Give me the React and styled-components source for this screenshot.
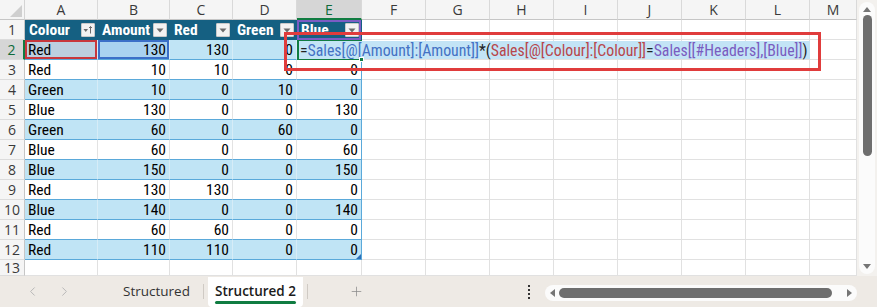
import React from "react";
import styled, { createGlobalStyle } from "styled-components";
import { ChevronLeft, ChevronRight, Plus } from "lucide-react";

const GlobalStyle = createGlobalStyle`
  html, body {
    margin: 0;
    padding: 0;
    background: #ffffff;
  }
  * {
    box-sizing: border-box;
  }
`;

const CELL_FONT = `"Roboto Condensed", "Liberation Sans Narrow", "DejaVu Sans Condensed", Roboto, sans-serif`;
const UI_FONT = `"Open Sans", "Noto Sans", Roboto, sans-serif`;

const widths = [73, 72, 63, 64, 65, 64, 64, 64, 64, 64, 64, 64, 47];
const letters = ["A", "B", "C", "D", "E", "F", "G", "H", "I", "J", "K", "L", "M"];

const headers = ["Colour", "Amount", "Red", "Green", "Blue"];
const rows = [
  ["Red", 130, 130, 0, null],
  ["Red", 10, 10, 0, 0],
  ["Green", 10, 0, 10, 0],
  ["Blue", 130, 0, 0, 130],
  ["Green", 60, 0, 60, 0],
  ["Blue", 60, 0, 0, 60],
  ["Blue", 150, 0, 0, 150],
  ["Red", 130, 130, 0, 0],
  ["Blue", 140, 0, 0, 140],
  ["Red", 60, 60, 0, 0],
  ["Red", 110, 110, 0, 0],
];

const Window = styled.div`
  width: 877px;
  height: 307px;
  display: flex;
  flex-direction: column;
  overflow: hidden;
  background: #eeeae5;
`;

const Main = styled.div`
  display: flex;
  height: 276px;
`;

const Sheet = styled.div`
  position: relative;
  width: 857px;
  height: 276px;
  overflow: hidden;
  background: #ffffff;
  display: grid;
  grid-template-columns: 25px ${widths.map((w) => `${w}px`).join(" ")};
  grid-template-rows: repeat(13, 20px) 16px;
  font-family: ${CELL_FONT};
  font-size: 15.5px;
  color: #000;
`;

const Corner = styled.div`
  position: relative;
  background: #f5f5f5;
  border-right: 1px solid #d4d4d4;
  border-bottom: 1px solid #c6c6c6;
  &::after {
    content: "";
    position: absolute;
    right: 2px;
    bottom: 2px;
    border-left: 12px solid transparent;
    border-bottom: 12px solid #cfcfcf;
  }
`;

const ColHead = styled.div`
  display: flex;
  align-items: center;
  justify-content: center;
  font-family: ${UI_FONT};
  font-size: 14px;
  color: ${({ $active }) => ($active ? "#0f6b3a" : "#3a3a3a")};
  background: ${({ $active }) => ($active ? "#d6d6d6" : "#f5f5f5")};
  border-right: 1px solid #d9d9d9;
  border-bottom: ${({ $active }) => ($active ? "2px solid #107c41" : "1px solid #c6c6c6")};
`;

const RowHead = styled.div`
  display: flex;
  align-items: center;
  justify-content: center;
  font-family: ${UI_FONT};
  font-size: 14px;
  color: ${({ $active }) => ($active ? "#0f6b3a" : "#3a3a3a")};
  background: ${({ $active }) => ($active ? "#d6d6d6" : "#f5f5f5")};
  border-bottom: 1px solid #dcdcdc;
  border-right: ${({ $active }) => ($active ? "2px solid #107c41" : "1px solid #c6c6c6")};
`;

const HeaderCell = styled.div`
  display: flex;
  align-items: center;
  justify-content: space-between;
  padding: 0 2px 0 4px;
  background: #156082;
  color: #ffffff;
  font-weight: 700;
  border-right: 1px solid #156082;
  box-shadow: ${({ $outline }) => ($outline ? `inset 0 0 0 2px ${$outline}` : "none")};
  overflow: hidden;
  white-space: nowrap;
`;

const FilterButton = styled.span`
  width: 14px;
  height: 14px;
  flex: none;
  display: flex;
  align-items: center;
  justify-content: center;
  background: #f2f2f2;
  border: 1px solid #c9c9c9;
  border-radius: 1px;
`;

const DataCell = styled.div`
  position: relative;
  display: flex;
  align-items: center;
  justify-content: ${({ $num }) => ($num ? "flex-end" : "flex-start")};
  padding: ${({ $num }) => ($num ? "0 3px 0 0" : "0 0 0 3px")};
  background: ${({ $fill, $band }) => $fill || ($band ? "#c0e4f5" : "#ffffff")};
  border-bottom: 1px solid #5aa9da;
  border-right: 1px solid ${({ $last, $band }) => ($last ? "#5aa9da" : $band ? "#d6ecf7" : "#e3e3e3")};
  box-shadow: ${({ $outline }) => ($outline ? `inset 0 0 0 2px ${$outline}` : "none")};
  white-space: nowrap;
`;

const EmptyCell = styled.div`
  border-right: 1px solid #e1e1e1;
  border-bottom: 1px solid #e1e1e1;
`;

const EditCell = styled.div`
  position: relative;
  z-index: 2;
  border: 2px solid #107c41;
  background: #c3e4f6;
`;

const FormulaText = styled.span`
  position: absolute;
  left: 0;
  top: -1px;
  width: 511px;
  height: 18px;
  display: flex;
  align-items: center;
  padding-left: 1px;
  background: #c3e4f6;
  white-space: nowrap;
  font-size: 15.8px;
  color: #222;
`;

const Ref = styled.span`
  color: ${({ $c }) => $c};
`;

const FillHandle = styled.span`
  position: absolute;
  right: -4px;
  bottom: -4px;
  width: 5px;
  height: 5px;
  background: #107c41;
  border: 1px solid #ffffff;
  z-index: 3;
`;

const ResizeHandle = styled.span`
  position: absolute;
  right: 0;
  bottom: 0;
  border-left: 5px solid transparent;
  border-bottom: 5px solid #2f6fb7;
`;

const Annotation = styled.div`
  position: absolute;
  left: 284px;
  top: 32px;
  width: 537px;
  height: 39px;
  border: 3px solid #e03c3c;
  z-index: 5;
  pointer-events: none;
`;

const VScroll = styled.div`
  width: 20px;
  height: 276px;
  background: #f3f1ee;
  padding: 2px 2px 2px 2px;
`;

const VTrack = styled.div`
  height: 100%;
  border-radius: 8px;
  background: #fbfbfb;
  display: flex;
  flex-direction: column;
  align-items: center;
  padding-top: 5px;
`;

const VThumb = styled.div`
  width: 9px;
  height: 141px;
  margin-top: 3px;
  border-radius: 5px;
  background: #6e6e6e;
`;

const Arrow = styled.span`
  width: 0;
  height: 0;
  border-style: solid;
  border-color: transparent;
  ${({ $dir }) =>
    $dir === "up"
      ? "border-width: 0 4px 5px 4px; border-bottom-color: #757575;"
      : $dir === "down"
      ? "border-width: 5px 4px 0 4px; border-top-color: #757575;"
      : $dir === "left"
      ? "border-width: 4px 5px 4px 0; border-right-color: #757575;"
      : "border-width: 4px 0 4px 5px; border-left-color: #757575;"}
`;

const Spacer = styled.div`
  flex: 1;
`;

const BottomGap = styled.div`
  height: 5px;
`;

const TabBar = styled.div`
  height: 31px;
  display: flex;
  align-items: stretch;
  font-family: ${UI_FONT};
  font-size: 13.5px;
  color: #333;
`;

const NavArea = styled.div`
  width: 110px;
  display: flex;
  align-items: center;
  gap: 17px;
  padding-left: 25px;
  color: #b3b3b3;
`;

const Tab = styled.div`
  width: ${({ $w }) => $w}px;
  display: flex;
  align-items: center;
  justify-content: center;
  position: relative;
  background: ${({ $active }) => ($active ? "#ffffff" : "transparent")};
  font-weight: ${({ $active }) => ($active ? 600 : 400)};
  color: ${({ $active }) => ($active ? "#1b1b1b" : "#333")};
  border-radius: 0 0 4px 4px;
  padding-bottom: 2px;
  margin: ${({ $active }) => ($active ? "1px 4px 0" : "0")};
`;

const TabLabel = styled.span`
  position: relative;
  &::after {
    content: "";
    display: ${({ $active }) => ($active ? "block" : "none")};
    position: absolute;
    left: 0;
    right: 0;
    bottom: -4px;
    height: 3px;
    border-radius: 2px;
    background: #107c41;
  }
`;

const TabDivider = styled.div`
  width: 1px;
  margin: 8px 0;
  background: #cfcac4;
`;

const AddArea = styled.div`
  width: 96px;
  display: flex;
  align-items: center;
  justify-content: center;
  color: #8a8a8a;
`;

const Dots = styled.div`
  width: 8px;
  display: flex;
  flex-direction: column;
  align-items: center;
  justify-content: center;
  gap: 2px;
  margin-right: 12px;
  span {
    width: 2px;
    height: 2px;
    background: #333;
  }
`;

const HScroll = styled.div`
  width: 312px;
  height: 16px;
  margin-top: 9px;
  border-radius: 8px;
  background: #fbfbfb;
  display: flex;
  align-items: center;
  padding: 0 5px;
  gap: 4px;
`;

const HThumb = styled.div`
  width: 273px;
  height: 10px;
  border-radius: 5px;
  background: #6e6e6e;
`;

const RightPad = styled.div`
  width: 20px;
`;

function DropIcon({ sort }) {
  return (
    <FilterButton>
      <svg width="10" height="10" viewBox="0 0 10 10">
        {sort ? (
          <>
            <path d="M0.5 4 L5 4 L2.75 7 Z" fill="#6b6b6b" />
            <path d="M7.5 1.5 L7.5 8.5 M6 3 L7.5 1.5 L9 3" stroke="#6b6b6b" strokeWidth="1" fill="none" />
          </>
        ) : (
          <path d="M1.5 3.5 L8.5 3.5 L5 7.5 Z" fill="#6b6b6b" />
        )}
      </svg>
    </FilterButton>
  );
}

function Formula() {
  return (
    <FormulaText>
      =<Ref $c="#4472c4">Sales[@[Amount]:[Amount]]</Ref>*(
      <Ref $c="#b8464b">Sales[@[Colour]:[Colour]]</Ref>=
      <Ref $c="#7a5cc0">Sales[[#Headers],[Blue]]</Ref>)
    </FormulaText>
  );
}

export default function App() {
  const cells = [];
  cells.push(<Corner key="corner" />);
  letters.forEach((l) =>
    cells.push(
      <ColHead key={`h-${l}`} $active={l === "E"}>
        {l}
      </ColHead>
    )
  );

  // row 1: table headers
  cells.push(<RowHead key="r1">1</RowHead>);
  headers.forEach((h, i) =>
    cells.push(
      <HeaderCell key={`th-${h}`} $outline={h === "Blue" ? "#7b5cc4" : null}>
        {h}
        <DropIcon sort={i === 0} />
      </HeaderCell>
    )
  );
  for (let c = 5; c < letters.length; c++) cells.push(<EmptyCell key={`e1-${c}`} />);

  rows.forEach((r, ri) => {
    const rowNum = ri + 2;
    const band = rowNum % 2 === 0;
    cells.push(
      <RowHead key={`r${rowNum}`} $active={rowNum === 2}>
        {rowNum}
      </RowHead>
    );
    r.forEach((v, ci) => {
      if (rowNum === 2 && ci === 4) {
        cells.push(
          <EditCell key="edit">
            <Formula />
            <FillHandle />
          </EditCell>
        );
        return;
      }
      let fill = null;
      let outline = null;
      if (rowNum === 2 && ci === 0) {
        fill = "#bccfe0";
        outline = "#c8373d";
      }
      if (rowNum === 2 && ci === 1) {
        fill = "#a9d2f0";
        outline = "#3b6fc8";
      }
      cells.push(
        <DataCell
          key={`d-${rowNum}-${ci}`}
          $num={ci > 0}
          $band={band}
          $last={ci === 4}
          $fill={fill}
          $outline={outline}
        >
          {v}
          {rowNum === 12 && ci === 4 && <ResizeHandle />}
        </DataCell>
      );
    });
    for (let c = 5; c < letters.length; c++) cells.push(<EmptyCell key={`e${rowNum}-${c}`} />);
  });

  cells.push(<RowHead key="r13">13</RowHead>);
  for (let c = 0; c < letters.length; c++) cells.push(<EmptyCell key={`e13-${c}`} />);

  return (
    <>
      <GlobalStyle />
      <Window>
        <Main>
          <Sheet>
            {cells}
            <Annotation />
          </Sheet>
          <VScroll>
            <VTrack>
              <Arrow $dir="up" />
              <VThumb />
              <Spacer />
              <Arrow $dir="down" />
              <BottomGap />
            </VTrack>
          </VScroll>
        </Main>
        <TabBar>
          <NavArea>
            <ChevronLeft size={15} strokeWidth={1.5} />
            <ChevronRight size={15} strokeWidth={1.5} />
          </NavArea>
          <Tab $w={93}>
            <TabLabel>Structured</TabLabel>
          </Tab>
          <TabDivider />
          <Tab $w={95} $active>
            <TabLabel $active>Structured 2</TabLabel>
          </Tab>
          <TabDivider />
          <AddArea>
            <Plus size={15} strokeWidth={1.2} />
          </AddArea>
          <Spacer />
          <Dots>
            <span />
            <span />
            <span />
            <span />
          </Dots>
          <HScroll>
            <Arrow $dir="left" />
            <HThumb />
            <Spacer />
            <Arrow $dir="right" />
          </HScroll>
          <RightPad />
        </TabBar>
      </Window>
    </>
  );
}
